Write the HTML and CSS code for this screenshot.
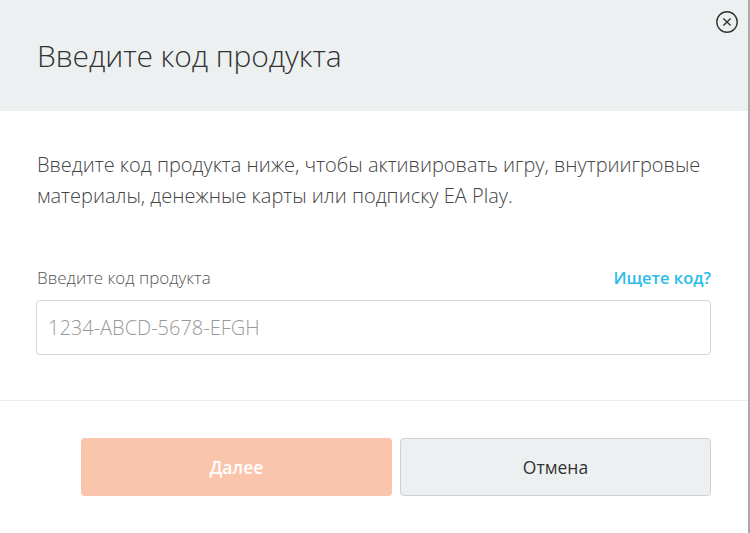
FILE: index.html
```html
<!doctype html>
<html lang="ru">
<head>
<meta charset="UTF-8">
<title>Введите код продукта</title>
<link rel="stylesheet" href="styles.css">
</head>
<body>
<div class="dialog">
	<div class="dlg_head">
		<h1>Введите код продукта</h1>
		<a class="dlg_close" href="###" title="Закрыть">
			<svg width="24" height="24" viewBox="0 0 24 24"><circle cx="12" cy="12" r="10.2" fill="none" stroke="#333" stroke-width="1.4"/><path d="M8.4 8.4 15.6 15.6M15.6 8.4 8.4 15.6" stroke="#333" stroke-width="1.4" fill="none"/></svg>
		</a>
	</div>
	<div class="dlg_body">
		<p class="intro">Введите код продукта ниже, чтобы активировать игру, внутриигровые материалы, денежные карты или подписку EA Play.</p>
		<div class="field_top">
			<label for="code">Введите код продукта</label>
			<a href="###" class="find_code">Ищете код?</a>
		</div>
		<input type="text" id="code" class="code_input" placeholder="1234-ABCD-5678-EFGH">
	</div>
	<div class="dlg_foot">
		<button class="btn btn_next" disabled>Далее</button>
		<button class="btn btn_cancel">Отмена</button>
	</div>
</div>
</body>
</html>
```

FILE: styles.css
```css
html,body {margin: 0;padding: 0;height: 100%;}
body {background: #fff;font-family: "Open Sans", "Liberation Sans", sans-serif;color: #333;}

/* 弹窗整体 */
.dialog {height: 533px;border-right: 2px solid #a9aaab;box-sizing: border-box;}

/* 头部 */
.dlg_head {position: relative;height: 111px;background: #edf0f1;padding: 0 37px;display: flex;align-items: center;}
.dlg_head h1 {margin: 0;font-size: 30px;font-weight: 300;color: #333;letter-spacing: -0.1px;}
.dlg_close {position: absolute;top: 10px;right: 9px;width: 24px;height: 24px;display: block;}
.dlg_close svg {display: block;}

/* 内容 */
.dlg_body {padding: 38px 37px 45px 36px;border-bottom: 1px solid #e8eeef;}
.intro {margin: 0 0 55px 1px;font-size: 20px;font-weight: 300;line-height: 31px;color: #444;}
.field_top {display: flex;justify-content: space-between;align-items: baseline;margin: 0 0 11px 1px;}
.field_top label {font-size: 17px;font-weight: 300;color: #555;}
.find_code {font-size: 16.5px;font-weight: 600;color: #2cbceb;text-decoration: none;}
.code_input {display: block;width: 100%;height: 55px;box-sizing: border-box;border: 1px solid #d3d6d8;border-radius: 4px;padding: 0 11px;font-family: inherit;font-size: 20px;font-weight: 300;color: #333;outline: 0 none;}
.code_input::placeholder {color: #999;}

/* 底部按钮 */
.dlg_foot {display: flex;justify-content: flex-end;gap: 8px;padding: 37px 37px 0 0;}
.btn {width: 311px;height: 58px;border-radius: 4px;font-family: inherit;font-size: 17.5px;cursor: pointer;}
.btn_next {background: #fbc5ad;border: 0 none;color: #fff;font-weight: 600;}
.btn_cancel {background: #edf0f1;border: 1px solid #cdd1d4;color: #333;}
```
